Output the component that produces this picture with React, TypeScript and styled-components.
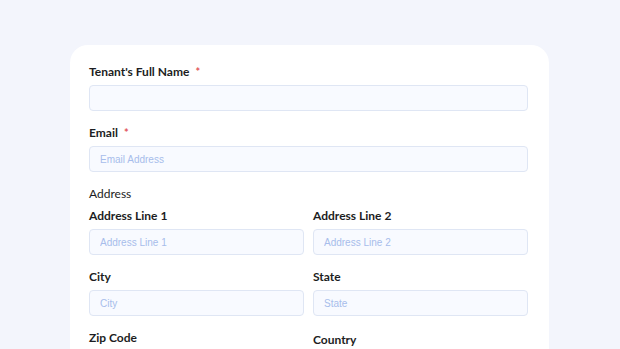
import styled, { createGlobalStyle } from "styled-components";

const GlobalStyle = createGlobalStyle`
  html, body {
    margin: 0;
    padding: 0;
    background: #f3f5fc;
  }
  body {
    font-family: "Lato", "Inter", sans-serif;
    -webkit-font-smoothing: antialiased;
  }
`;

const Page = styled.div`
  min-height: 349px;
  padding: 45px 0 0 70px;
  box-sizing: border-box;
  overflow: hidden;
`;

const Card = styled.div`
  width: 479px;
  min-height: 330px;
  box-sizing: border-box;
  background: #ffffff;
  border-radius: 18px;
  padding: 19px 21px 20px 19px;
  display: flex;
  flex-direction: column;
  gap: 14px;
`;

const Field = styled.div`
  display: flex;
  flex-direction: column;
  gap: 6px;
`;

const Label = styled.label<{ $shift?: number }>`
  display: block;
  font-size: 12px;
  line-height: 15px;
  font-weight: 700;
  color: #1c1d22;
  margin-top: ${(p) => p.$shift ?? 0}px;
`;

const Required = styled.span`
  color: #e2555a;
  margin-left: 6px;
  font-size: 11px;
`;

const GroupTitle = styled.div`
  font-size: 12px;
  line-height: 15px;
  font-weight: 400;
  color: #1c1d22;
`;

const Group = styled.div`
  display: flex;
  flex-direction: column;
  gap: 7px;
`;

const Grid = styled.div`
  display: grid;
  grid-template-columns: 1fr 1fr;
  column-gap: 9px;
  row-gap: 14px;
`;

const Input = styled.input`
  height: 26px;
  box-sizing: border-box;
  width: 100%;
  border: 1px solid #dfe6f4;
  border-radius: 4px;
  background: #f8faff;
  padding: 0 10px;
  font-family: "Liberation Sans", Arial, sans-serif;
  font-size: 10px;
  color: #1c1d22;
  outline: none;

  &::placeholder {
    color: #a7bdeb;
  }
`;

export default function App() {
  return (
    <>
      <GlobalStyle />
      <Page>
        <Card>
          <Field>
            <Label>
              Tenant's Full Name<Required>*</Required>
            </Label>
            <Input />
          </Field>
          <Field>
            <Label>
              Email<Required>*</Required>
            </Label>
            <Input placeholder="Email Address" />
          </Field>
          <Group>
            <GroupTitle>Address</GroupTitle>
            <Grid>
              <Field>
                <Label>Address Line 1</Label>
                <Input placeholder="Address Line 1" />
              </Field>
              <Field>
                <Label>Address Line 2</Label>
                <Input placeholder="Address Line 2" />
              </Field>
              <Field>
                <Label>City</Label>
                <Input placeholder="City" />
              </Field>
              <Field>
                <Label>State</Label>
                <Input placeholder="State" />
              </Field>
              <Field>
                <Label>Zip Code</Label>
                <Input placeholder="Zip Code" />
              </Field>
              <Field>
                <Label $shift={2}>Country</Label>
                <Input placeholder="Country" />
              </Field>
            </Grid>
          </Group>
        </Card>
      </Page>
    </>
  );
}
